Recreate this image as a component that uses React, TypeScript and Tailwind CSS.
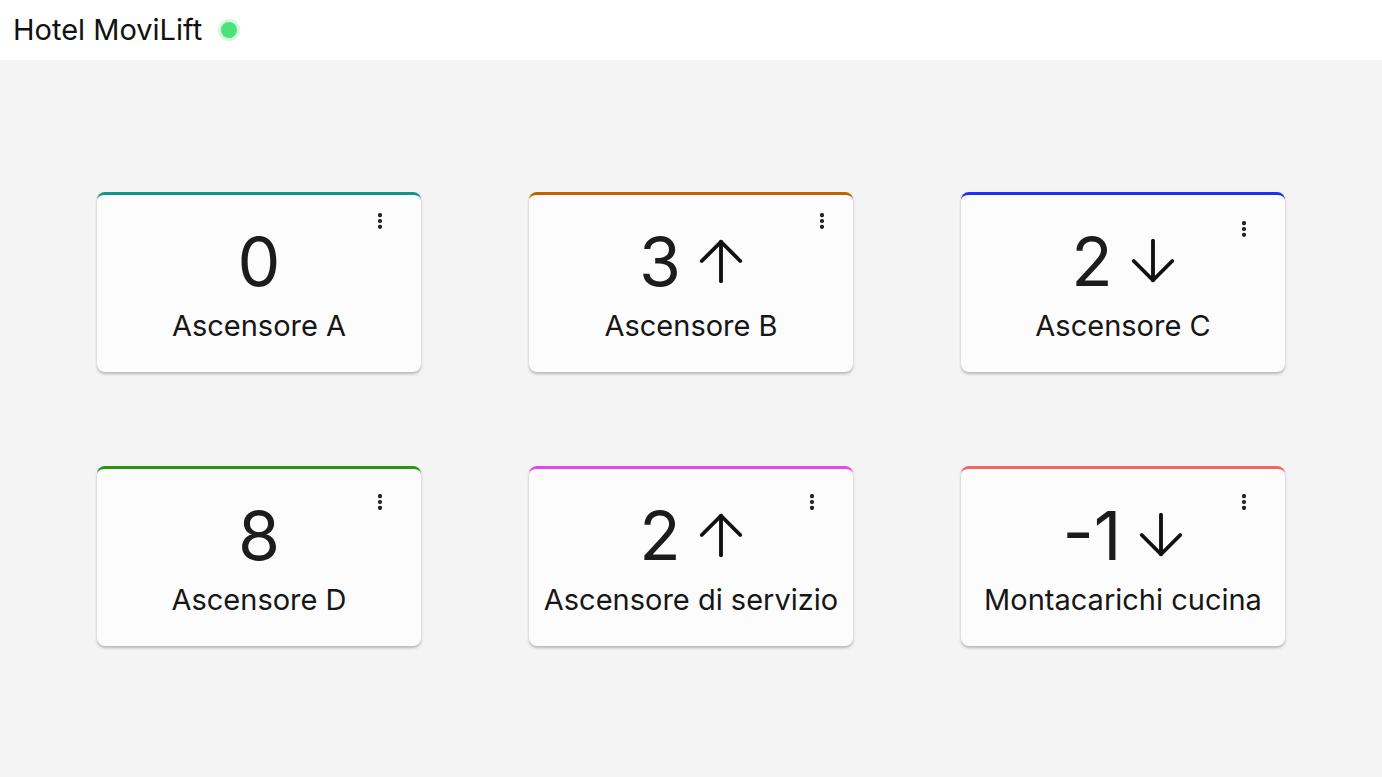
import { MoreVertical } from "lucide-react";

type Dir = "up" | "down" | null;

const lifts: { floor: string; dir: Dir; name: string; bar: string; menu: string }[] = [
  { floor: "0", dir: null, name: "Ascensore A", bar: "border-t-[#129687]", menu: "top-[16px] right-[31px]" },
  { floor: "3", dir: "up", name: "Ascensore B", bar: "border-t-[#c56200]", menu: "top-[16px] right-[21px]" },
  { floor: "2", dir: "down", name: "Ascensore C", bar: "border-t-[#1f2ffa]", menu: "top-[24px] right-[31px]" },
  { floor: "8", dir: null, name: "Ascensore D", bar: "border-t-[#2a9410]", menu: "top-[23px] right-[31px]" },
  { floor: "2", dir: "up", name: "Ascensore di servizio", bar: "border-t-[#e04ae8]", menu: "top-[23px] right-[31px]" },
  { floor: "-1", dir: "down", name: "Montacarichi cucina", bar: "border-t-[#f26464]", menu: "top-[23px] right-[31px]" },
];

const Arrow = ({ dir }: { dir: "up" | "down" }) => (
  <svg
    width="44"
    height="44"
    viewBox="0 0 24 24"
    fill="none"
    stroke="#111"
    strokeWidth="2.1"
    strokeLinecap="round"
    strokeLinejoin="round"
    className={dir === "down" ? "rotate-180" : ""}
  >
    <path d="M12 23V1.5" />
    <path d="M1.5 12 12 1.5 22.5 12" />
  </svg>
);

const LiftCard = ({ lift }: { lift: (typeof lifts)[number] }) => (
  <div
    className={`relative h-[180px] rounded-lg border-t-[3px] ${lift.bar} bg-[#fcfcfc] shadow-[0_2px_3px_rgba(0,0,0,0.25)] flex flex-col items-center pt-[26px]`}
  >
    <button className={`absolute ${lift.menu} w-5 h-5 flex items-center justify-center text-[#111]`}>
      <MoreVertical size={20} strokeWidth={3} />
    </button>
    <div className="flex items-center gap-[18px] h-[80px]">
      <span className="text-[68px] leading-none text-[#1c1c1c]">{lift.floor}</span>
      {lift.dir && <Arrow dir={lift.dir} />}
    </div>
    <div className="mt-[7px] text-[29px] leading-9 text-[#161616]">{lift.name}</div>
  </div>
);

export default function App() {
  return (
    <div className="min-h-screen flex flex-col bg-[#f4f4f4] font-['Inter',sans-serif]">
      <header className="h-[60px] bg-white flex items-center px-[13px] gap-[16px]">
        <span className="text-[29px] text-[#111]">Hotel MoviLift</span>
        <span className="w-[22px] h-[22px] rounded-full bg-[#d4f8dd] flex items-center justify-center">
          <span className="w-[16px] h-[16px] rounded-full bg-[#4ae27a]" />
        </span>
      </header>
      <main className="flex-1 flex items-center justify-center">
        <div className="grid grid-cols-[repeat(3,324px)] gap-x-[108px] gap-y-[94px]">
          {lifts.map((l) => (
            <LiftCard key={l.name} lift={l} />
          ))}
        </div>
      </main>
    </div>
  );
}
